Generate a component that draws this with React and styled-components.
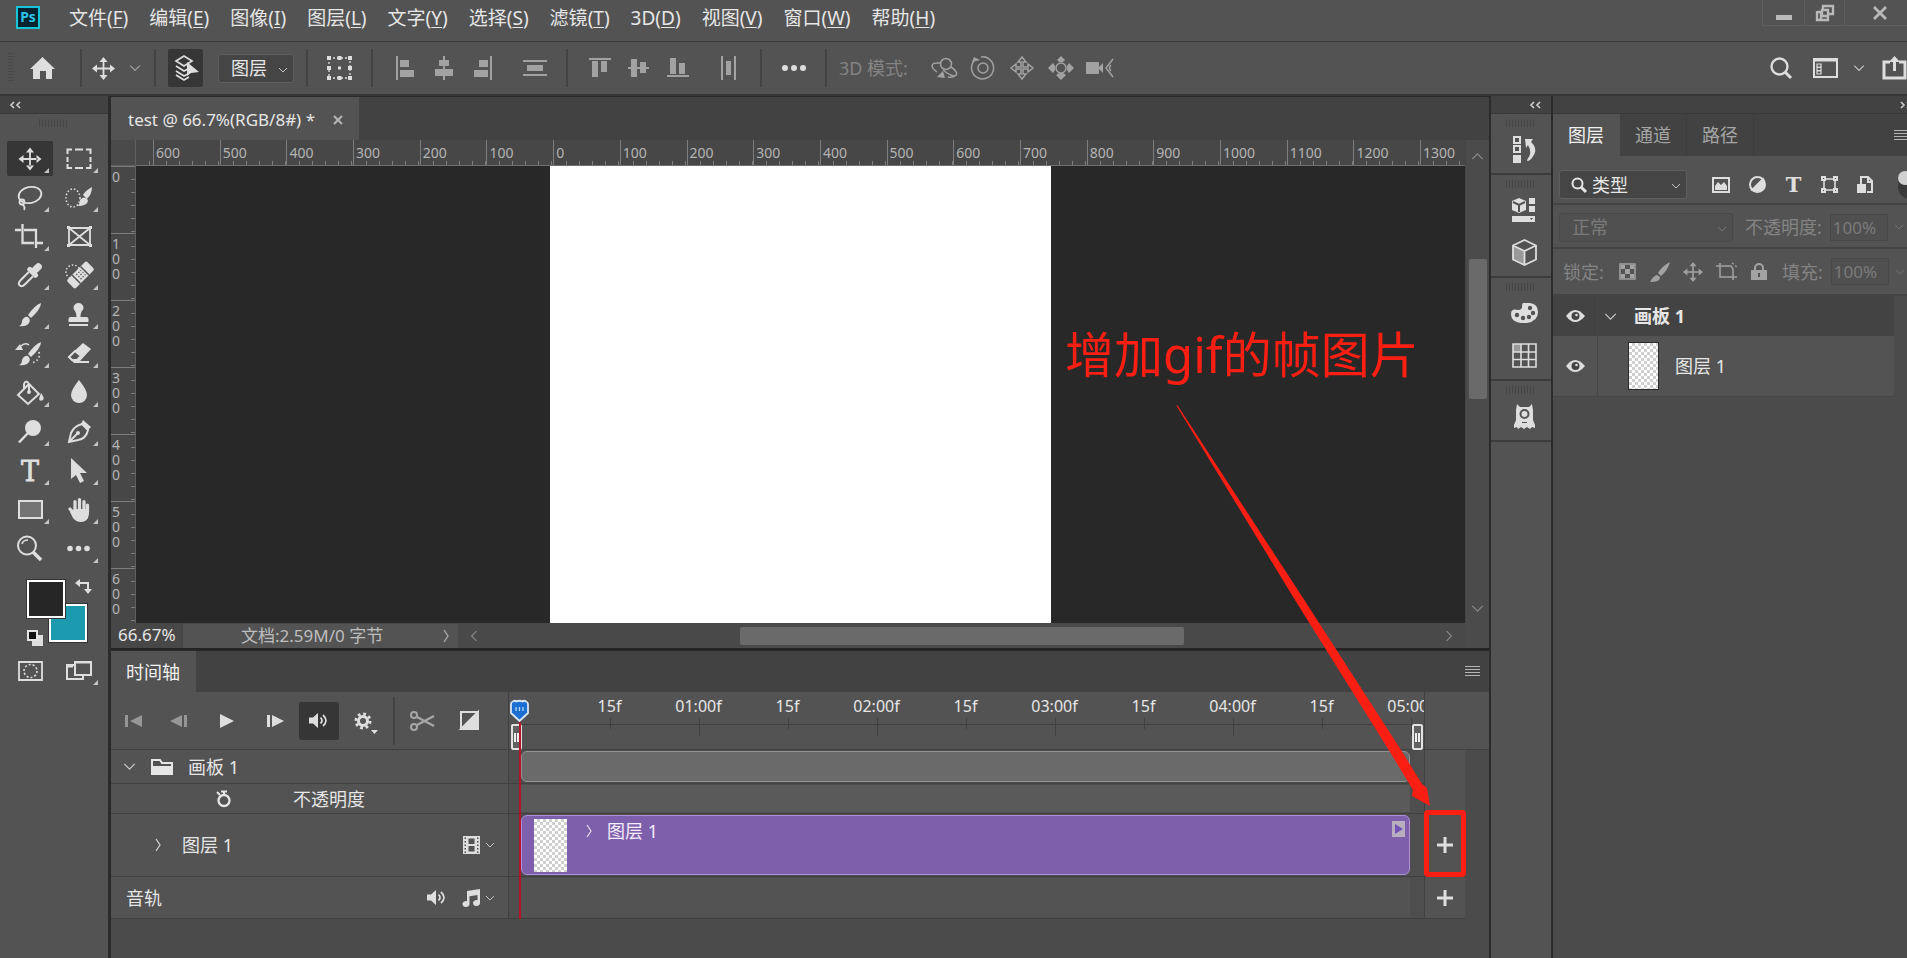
import React from "react";
import styled, { createGlobalStyle } from "styled-components";

const c = {
  panel: "#535353",
  deep: "#424242",
  mid: "#4b4b4b",
  line: "#3c3c3c",
  edge: "#2b2b2b",
  canvas: "#282828",
  icon: "#dedede",
  soft: "#a2a2a2",
  faint: "#848484",
  text: "#e6e6e6",
  red: "#fb1e12",
};

const GlobalStyle = createGlobalStyle`
  *, *::before, *::after { box-sizing: border-box; }
  body {
    margin: 0;
    background: ${c.mid};
    color: ${c.text};
    font: 18px/24px "Noto Sans", "Noto Sans CJK SC", sans-serif;
    overflow: hidden;
  }
  button, input, select { font: inherit; color: inherit; margin: 0; }
`;

/* ---------- shared parts ---------- */

const Page = styled.div`
  display: flex;
  flex-direction: column;
  min-height: 100vh;
`;

const Plain = styled.button`
  display: flex;
  align-items: center;
  justify-content: center;
  padding: 0;
  border: 0;
  background: none;
  color: ${(p) => p.$color || c.icon};
  flex: none;
  svg { flex: none; display: block; }
`;

const Drawing = styled.svg`
  display: block;
  flex: none;
  overflow: visible;
`;

function Icon({ w, h, children, solid }) {
  return (
    <Drawing
      width={w}
      height={h}
      viewBox={`0 0 ${w} ${h}`}
      fill={solid ? "currentColor" : "none"}
      stroke={solid ? "none" : "currentColor"}
      strokeWidth="2"
      aria-hidden="true"
    >
      {children}
    </Drawing>
  );
}

const Chevron = ({ dir = "down", size = 10 }) => {
  const d = {
    down: "M1 3l4 4 4-4",
    up: "M1 7l4-4 4 4",
    left: "M7 1L3 5l4 4",
    right: "M3 1l4 4-4 4",
  }[dir];
  return (
    <Drawing width={size} height={size} viewBox="0 0 10 10" fill="none" stroke="currentColor" strokeWidth="1" strokeOpacity="0.8" aria-hidden="true">
      <path d={d} />
    </Drawing>
  );
};

const TallChevron = () => (
  <Icon w={7} h={14}><path d="M1 1l4 6-4 6" strokeWidth="1.200" strokeOpacity="0.9" /></Icon>
);

const Double = ({ right }) => (
  <Icon w={11} h={8}>
    <path d={right ? "M1 1l3 3-3 3M7 1l3 3-3 3" : "M4 1L1 4l3 3M10 1L7 4l3 3"} strokeWidth="1.6" />
  </Icon>
);

const Grip = styled.div`
  width: 30px;
  height: 8px;
  background: repeating-linear-gradient(90deg, #464646 0 1px, transparent 1px 3px);
`;

const MenuLines = () => (
  <Icon w={15} h={11} solid>
    <path d="M0 0h15v1H0zM0 3h15v1H0zM0 6h15v1H0zM0 9h15v1H0z" />
  </Icon>
);

const Checker = styled.span`
  flex: none;
  width: ${(p) => p.$w}px;
  height: ${(p) => p.$h}px;
  background: repeating-conic-gradient(#cfcfcf 0 25%, #fff 0 50%) 0 0 / 6px 6px;
  box-shadow: ${(p) => (p.$framed ? `0 0 0 1px ${c.edge}` : "none")};
`;

const Move = ({ size = 23 }) => (
  <Drawing width={size} height={size} viewBox="0 0 23 23" fill="currentColor" aria-hidden="true">
    <path d="M10.6 4h1.8v6.6H19v1.8h-6.6V19h-1.8v-6.6H4v-1.8h6.6z" />
    <path d="M11.5 0l4 5h-8zM11.5 23l4-5h-8zM0 11.5l5-4v8zM23 11.5l-5-4v8z" />
  </Drawing>
);

const Speaker = () => (
  <Icon w={20} h={15} solid>
    <path d="M0 4.500h4L9 0v15l-5-4.500H0z" />
    <path d="M11.500 4.500q3 3 0 6M14 2q6 5.500 0 11" fill="none" stroke="currentColor" strokeWidth="1.7" />
  </Icon>
);

/* ---------- menu bar ---------- */

const MenuBar = styled.header`
  display: flex;
  height: 42px;
  background: ${c.panel};
  border-bottom: 1px solid ${c.line};
  padding-left: 16px;
`;

const Logo = styled.div`
  width: 24px;
  height: 23px;
  margin: 6px 18px 0 0;
  border: 2px solid #18c5d8;
  background: #04222f;
  color: #2cc3e6;
  font-size: 14px;
  font-weight: 700;
  line-height: 18px;
  text-align: center;
`;

const MenuItem = styled.button`
  height: 36px;
  padding: 0 10px 0 11px;
  border: 0;
  background: none;
  font-size: 19px;
  line-height: 36px;
  white-space: nowrap;
  u { text-underline-offset: 2px; text-decoration-thickness: 1px; }
`;

const WindowButtons = styled.div`
  display: flex;
  height: 26px;
  margin-left: auto;
  border: solid #5f5f5f;
  border-width: 0 0 1px 1px;
`;

const WindowButton = styled(Plain)`
  width: ${(p) => p.$w}px;
  padding-left: ${(p) => p.$pad || 0}px;
  color: #b9b9b9;
  & + & { border-left: 1px solid #5f5f5f; }
`;

const menus = [
  ["文件", "F"], ["编辑", "E"], ["图像", "I"], ["图层", "L"], ["文字", "Y"], ["选择", "S"],
  ["滤镜", "T"], ["3D", "D"], ["视图", "V"], ["窗口", "W"], ["帮助", "H"],
];

function TopMenu() {
  return (
    <MenuBar>
      <Logo>Ps</Logo>
      {menus.map(([name, key]) => (
        <MenuItem key={name}>{name}(<u>{key}</u>)</MenuItem>
      ))}
      <WindowButtons>
        <WindowButton $w={41} aria-label="最小化"><Icon w={16} h={16} solid><path d="M0 10h16v5H0z" /></Icon></WindowButton>
        <WindowButton $w={40} aria-label="还原">
          <Icon w={18} h={16}><path d="M7 5V1h10v8h-6M1 7h4v8h7v-3M1 6v9h9M6 5v6h6V5z" strokeWidth="2.300" /></Icon>
        </WindowButton>
        <WindowButton $w={63} $pad={8} aria-label="关闭"><Icon w={14} h={12}><path d="M1 0l12 12M13 0L1 12" strokeWidth="2.800" /></Icon></WindowButton>
      </WindowButtons>
    </MenuBar>
  );
}

/* ---------- options bar ---------- */

const OptionsBar = styled.div`
  display: flex;
  align-items: center;
  height: 54px;
  background: ${c.panel};
  border-bottom: 2px solid #363636;
`;

const Group = styled.div`
  display: flex;
  align-items: center;
  gap: ${(p) => p.$gap || 0}px;
  height: 38px;
  padding: 0 ${(p) => (p.$tight ? 4 : 12)}px;
  border-right: ${(p) => (p.$last ? 0 : 2)}px solid #434343;
`;

const Row = styled.div`
  display: flex;
  align-items: center;
`;

const Tool = styled(Plain)`
  width: ${(p) => p.$w || 39}px;
  height: 38px;
  background: ${(p) => (p.$on ? "#363636" : "none")};
  border-radius: 2px;
`;

const EdgeGrip = styled.div`
  width: 6px;
  height: 30px;
  margin: 0 3px 0 -4px;
  background: repeating-linear-gradient(#494949 0 1px, transparent 1px 3px);
`;

const Muted = styled.span`
  color: ${c.faint};
  white-space: nowrap;
`;

const SelectBox = styled.label`
  display: flex;
  align-items: center;
  position: relative;
  flex: none;
  width: ${(p) => p.$w}px;
  height: 29px;
  color: ${(p) => (p.$off ? "#7b7b7b" : c.text)};
  background: ${(p) => (p.$off ? "#505050" : "#454545")};
  border: 1px solid ${(p) => (p.$off ? "#484848" : "#5f5f5f")};
  border-radius: 3px;
  select {
    width: 100%;
    height: 100%;
    padding: 0 0 0 ${(p) => p.$pad}px;
    border: 0;
    background: none;
    appearance: none;
    line-height: 26px;
    opacity: 1;
    color: inherit;
  }
  > svg { position: absolute; right: 5px; top: 10px; pointer-events: none; }
  > svg.lead { left: 11px; right: auto; top: 6px; }
`;

const alignIcons = {
  left: "M0 0h2v24H0zM4 4h9v7H4zM4 14h14v7H4z",
  centerH: "M8 0h2v24H8zM4 4h10v6H4zM0 13h18v7H0z",
  right: "M16 0h2v24h-2zM5 4h9v7H5zM0 14h14v7H0z",
  spreadV: "M0 4h24v2H0zM0 18h24v2H0zM4 9h16v6H4z",
  top: "M0 2h22v2H0zM3 5h6v16H3zM12 5h6v11h-6z",
  middle: "M0 11h21v2H0zM3 3h6v18H3zM12 6h6v11h-6z",
  bottom: "M0 19h22v2H0zM3 2h6v16H3zM12 7h6v11h-6z",
  spreadH: "M0 0h2v24H0zM13 0h2v24h-2zM5 5h5v14H5z",
};

const Align = ({ name, w = 18, label }) => (
  <Tool $color={c.soft} aria-label={label}>
    <Icon w={w} h={24} solid><path d={alignIcons[name]} /></Icon>
  </Tool>
);

function Options() {
  return (
    <OptionsBar>
      <Group>
        <EdgeGrip />
        <Tool $w={51} aria-label="主页">
          <Icon w={25} h={22} solid><path d="M12.500 0L25 12h-3v10h-6v-8h-6v8H3V12H0z" /></Icon>
        </Tool>
      </Group>
      <Group $tight>
        <Tool $w={34} aria-label="移动工具"><Move /></Tool>
        <Tool $w={30} $color="#b5b5b5" aria-label="工具预设"><Chevron size={12} /></Tool>
      </Group>
      <Group $gap={15}>
        <Tool $w={35} $on aria-label="自动选择">
          <Icon w={26} h={26}>
            <path d="M3 6l8-5 8 5-8 5zM3 11l8 5 4-2M3 16l8 5 4-2M3 20l8 5 5-3" strokeWidth="1.700" />
            <path d="M14 7v14l4-3 8-1z" fill="currentColor" stroke="none" />
          </Icon>
        </Tool>
        <SelectBox $w={76} $pad={12}>
          <select aria-label="自动选择对象"><option>图层</option></select>
          <Chevron />
        </SelectBox>
      </Group>
      <Group>
        <Tool aria-label="显示变换控件">
          <Icon w={25} h={24}>
            <path d="M2 2h21v20H2z" strokeDasharray="2 2" strokeWidth="1.300" />
            <path d="M0 0h4v4H0zM10.500 0h4v4h-4zM21 0h4v4h-4zM0 10h4v4H0zM21 10h4v4h-4zM0 20h4v4H0zM10.500 20h4v4h-4zM21 20h4v4h-4zM11 10.500h3v3h-3z" fill="currentColor" stroke="none" />
          </Icon>
        </Tool>
      </Group>
      <Group $gap={13}>
        <Row>
          <Align name="left" label="左对齐" /><Align name="centerH" label="水平居中对齐" /><Align name="right" label="右对齐" />
        </Row>
        <Align name="spreadV" w={24} label="垂直分布" />
      </Group>
      <Group $gap={12}>
        <Row>
          <Align name="top" w={22} label="顶对齐" /><Align name="middle" w={21} label="垂直居中对齐" /><Align name="bottom" w={22} label="底对齐" />
        </Row>
        <Align name="spreadH" w={15} label="水平分布" />
      </Group>
      <Group>
        <Tool aria-label="更多">
          <Icon w={24} h={6} solid><circle cx="3" cy="3" r="3" /><circle cx="12" cy="3" r="3" /><circle cx="21" cy="3" r="3" /></Icon>
        </Tool>
      </Group>
      <Group $last $gap={17}>
        <Muted>3D 模式:</Muted>
        <Row>
          <Tool $color={c.soft} aria-label="环绕移动 3D 相机">
            <Icon w={27} h={22}>
              <circle cx="15" cy="7" r="5.500" strokeWidth="1.500" />
              <path d="M9 6C-2 5 0 11 6 15M12 13q6 5 11 6c5-1 2-6-3-9M17 20q4 1 7-1" strokeWidth="1.500" />
              <path d="M6 20l6-6 2 7z" fill="currentColor" stroke="none" />
            </Icon>
          </Tool>
          <Tool $color={c.soft} aria-label="滚动 3D 相机">
            <Icon w={24} h={24}>
              <circle cx="12" cy="12" r="5" strokeWidth="1.500" />
              <path d="M10 1a11 11 0 1 1-7 4" strokeWidth="1.500" />
              <path d="M1 6l2-5 6 3z" fill="currentColor" stroke="none" />
            </Icon>
          </Tool>
          <Tool $color={c.soft} aria-label="平移 3D 相机">
            <Icon w={24} h={24}>
              <path d="M12 1l4 5h-3v5h5V8l5 4-5 4v-3h-5v5h3l-4 5-4-5h3v-5H6v3l-5-4 5-4v3h5V6H8z" strokeWidth="1.500" />
            </Icon>
          </Tool>
          <Tool $color={c.soft} aria-label="滑动 3D 相机">
            <Icon w={26} h={24}>
              <circle cx="13" cy="12" r="5" strokeWidth="1.500" />
              <path d="M13 0l4 4-2 2h-4L9 4zM13 24l5-5-3-2h-4l-3 2zM0 12l5-5 2 3v4l-2 3zM26 12l-5-5-2 3v4l2 3z" fill="currentColor" stroke="none" />
            </Icon>
          </Tool>
          <Tool $color={c.soft} aria-label="变焦 3D 相机">
            <Icon w={28} h={18}>
              <path d="M0 4q0-1 1-1h11q1 0 1 1v10q0 1-1 1H1q-1 0-1-1zM13 8l4-4v10l-4-4z" fill="currentColor" stroke="none" />
              <path d="M27 0l-7 9 7 9M25 6q-3 3 0 6" strokeWidth="1.500" />
            </Icon>
          </Tool>
        </Row>
      </Group>
      <RightTools>
        <Tool $w={44} aria-label="搜索">
          <Icon w={22} h={22}><circle cx="9.500" cy="9.500" r="8" strokeWidth="2.300" /><path d="M15 15l6 6" strokeWidth="3" /></Icon>
        </Tool>
        <Tool $w={44} aria-label="工作区">
          <Icon w={25} h={20}>
            <path d="M1 1h23v18H1zM1 2.500h23" /><path d="M4 6h4v3H4zM4 9.500h4v3H4zM4 13h4v3H4z" strokeWidth="1.200" />
          </Icon>
        </Tool>
        <Tool $w={24} aria-label="工作区菜单"><Chevron size={12} /></Tool>
        <ShareTool aria-label="共享">
          <Icon w={25} h={24}><path d="M8 6H2v16h21V6h-6" strokeWidth="3" /><path d="M12.500 4v11" strokeWidth="3" /><path d="M7 6l5.500-6L18 6z" fill="currentColor" stroke="none" /></Icon>
        </ShareTool>
      </RightTools>
    </OptionsBar>
  );
}

const RightTools = styled.div`
  display: flex;
  margin-left: auto;
`;

const ShareTool = styled(Tool)`
  width: 36px;
  justify-content: flex-end;
`;

/* ---------- toolbox ---------- */

const Main = styled.main`
  display: flex;
  flex: 1;
  min-height: 0;
`;

const Toolbox = styled.aside`
  flex: none;
  width: 111px;
  background: ${c.panel};
  border-right: 3px solid ${c.edge};
`;

const DockHeader = styled.div`
  display: flex;
  align-items: center;
  height: 18px;
  padding: 0 10px;
  color: #cfcfcf;
  background: ${c.deep};
  border-bottom: 1px solid #393939;
  justify-content: ${(p) => p.$justify || "flex-start"};
`;

const GripRow = styled.div`
  display: flex;
  justify-content: center;
  height: ${(p) => p.$h}px;
  padding-top: 5px;
`;

const ToolGrid = styled.div`
  display: grid;
  grid-template-columns: 46px 46px;
  gap: 4px 3px;
  padding-left: 7px;
`;

const ToolCell = styled(Plain)`
  width: 46px;
  height: 35px;
  border-radius: 2px;
  background: ${(p) => (p.$on ? "#363636" : "none")};
`;

const brush = (
  <>
    <path d="M34 6q-6 2-13 12l3 3Q34 12 34 6z" />
    <path d="M12 29q3-1 3-5a5 5 0 0 1 6-4q3 3 1 6-3 4-10 3z" />
  </>
);
const line = { fill: "none", stroke: "currentColor", strokeWidth: 2 };

const tools = [
  ["移动", <g key="i" transform="translate(11.500 6.500)"><path d="M10.600 4h1.800v6.600H19v1.800h-6.600V19h-1.800v-6.600H4v-1.800h6.600zM11.500 0l4 5h-8zM11.500 23l4-5h-8zM0 11.500l5-4v8zM23 11.500l-5-4v8z" /></g>],
  ["矩形选框", <path key="i" {...line} d="M11.500 13V8.500H16M19 8.500h8M30 8.500h4.500V13M34.500 16v5M34.500 23v4H30M27 27h-8M16 27h-4.500v-4M11.500 21v-5" />],
  ["套索", <g key="i" {...line} strokeWidth="1.800"><ellipse cx="23" cy="15" rx="11.500" ry="8" transform="rotate(-12 23 15)" /><circle cx="15" cy="22" r="2.500" /><path d="M14 24q5 2 3 6" /></g>],
  ["快速选择", <g key="i"><ellipse cx="17" cy="18" rx="7" ry="9" {...line} strokeWidth="1.500" strokeDasharray="1.500 2" /><path d="M36 7q-6 3-9 8l4 4q5-5 5-12zM21 26q3-1 3-6 4-5 8 0 0 6-11 6z" /></g>],
  ["裁剪", <path key="i" {...line} strokeWidth="2.300" d="M8 11h6M17 11h12v18M15.500 5v19H27M30 24h6" />],
  ["图框", <g key="i"><path {...line} strokeWidth="1.800" d="M13 9h21v17H13zM13 9l21 17M34 9L13 26" /><path d="M11 7h3v3h-3zM33 7h3v3h-3zM11 25h3v3h-3zM33 25h3v3h-3z" /></g>, true],
  ["吸管", <g key="i" transform="translate(22.500 17.500) rotate(45)"><rect x="-3.500" y="-16" width="7" height="11" rx="3.500" /><rect x="-6.500" y="-7" width="13" height="5" rx="2" /><path {...line} d="M-3-2V9q0 5 3 5t3-5V-2" /></g>],
  ["污点修复", <g key="i"><circle cx="17" cy="14" r="7" {...line} strokeWidth="1.500" strokeDasharray="1.500 2" /><g transform="translate(24.500 17) rotate(-45)"><rect x="-14" y="-6" width="28" height="12" rx="2" /><path d="M-6-6V6M6-6V6" stroke={c.panel} strokeWidth="1.500" /><path d="M-3-3H4M-3 0H4M-3 3H4" stroke={c.panel} strokeWidth="1.200" strokeDasharray="1.500 1.500" /></g></g>],
  ["画笔", <g key="i">{brush}</g>],
  ["仿制图章", <path key="i" d="M22.500 6a5 5 0 0 1 5 5c0 2-3 3-3 9h6q2 0 2 2v3h-20v-3q0-2 2-2h6c0-6-3-7-3-9a5 5 0 0 1 5-5zM13 27h19v2H13z" />],
  ["历史记录画笔", <g key="i">{brush}<path d="M8 14l5-6 3 6z" /><path {...line} strokeWidth="1.500" d="M14 10q4-4 8-1" /><path {...line} strokeWidth="1.800" strokeDasharray="1.500 2.500" d="M32 16q2 8-7 11" /></g>],
  ["橡皮擦", <g key="i"><path d="M27 7l8 6-11 12h-8l-4-4z" /><path d="M19 15l6 5-4 4h-5l-3-3z" fill={c.panel} stroke="currentColor" /><path d="M16 25h17v2H18z" /></g>],
  ["油漆桶", <g key="i"><path {...line} d="M22 9l10 10-11 10-10-9zM17 14V9q2-5 5 0v7" /><circle cx="22" cy="17" r="2" /><path d="M34 18q4 5 2 7-3 2-4-1z" /></g>],
  ["模糊", <path key="i" d="M23 5q8 10 8 15a8 8 0 0 1-16 0q0-5 8-15z" />],
  ["减淡", <g key="i"><circle cx="26" cy="14" r="8" /><path {...line} strokeWidth="2.500" d="M21 19l-9 9.500" /></g>],
  ["钢笔", <g key="i"><path {...line} d="M26 10l6 6q-2 9-10 10l-9 2 2-9q3-7 11-9zM14 27l8-8" /><path d="M27 6l8 7-3 3-7-6z" /><circle cx="22" cy="19" r="2" /></g>],
  ["横排文字", <text key="i" x="23" y="28" textAnchor="middle" fontFamily="DejaVu Serif, serif" fontSize="27" stroke="currentColor" strokeWidth="0.800">T</text>],
  ["路径选择", <path key="i" d="M15 5v21l5-4 4 8 4-2-4-8h7z" />],
  ["矩形", <rect key="i" x="12" y="9" width="23" height="17" fill="#747474" stroke="currentColor" strokeWidth="2" />],
  ["抓手", <g key="i"><path {...line} strokeWidth="3.200" strokeLinecap="round" d="M19 18V9.500M23.500 17V7.500M28 18V9.500M31.500 20v-7M14 17l5 6" /><path d="M17.500 17H33v5q-1 8-8 8-5 0-8-4l-3-6 3-1z" /></g>],
  ["缩放", <g key="i" {...line}><circle cx="20" cy="14.500" r="9" /><path d="M15 13q1-4 6-4" strokeWidth="1.500" /><path d="M26 21l8 8" strokeWidth="3.500" /></g>, true],
  ["编辑工具栏", <g key="i"><circle cx="14" cy="17.500" r="2.800" /><circle cx="22.500" cy="17.500" r="2.800" /><circle cx="31" cy="17.500" r="2.800" /></g>],
];

const Swatches = styled.div`
  position: relative;
  width: 66px;
  height: 70px;
  margin: 12px 0 5px 26px;
`;

const Swatch = styled.button`
  position: absolute;
  left: ${(p) => p.$x}px;
  top: ${(p) => p.$y}px;
  width: 38px;
  height: 38px;
  padding: 0;
  border: 2px solid #fff;
  outline: 1px solid #333;
  border-radius: 0;
  background: ${(p) => p.$fill};
`;

const SwatchAction = styled(Plain)`
  position: absolute;
  left: ${(p) => p.$x}px;
  top: ${(p) => p.$y}px;
`;

function ToolPanel() {
  return (
    <Toolbox>
      <DockHeader><Double /></DockHeader>
      <GripRow $h={27}><Grip /></GripRow>
      <ToolGrid>
        {tools.map(([label, art, single], i) => (
          <ToolCell key={label} $on={i === 0} aria-label={label}>
            <Icon w={46} h={35} solid>
              {art}
              {!single && <path d="M42 27v5h-5z" fill="#c4c4c4" />}
            </Icon>
          </ToolCell>
        ))}
      </ToolGrid>
      <Swatches>
        <Swatch $x={23} $y={26} $fill="#1c9bb0" aria-label="背景色" />
        <Swatch $x={1} $y={2} $fill="#262626" aria-label="前景色" />
        <SwatchAction $x={49} $y={1} aria-label="切换前景色和背景色">
          <Icon w={17} h={16}><path d="M5 4h8v8" /><path d="M0 4l5-4v8zM9 10h8l-4 5z" fill="currentColor" stroke="none" /></Icon>
        </SwatchAction>
        <SwatchAction $x={1} $y={52} aria-label="默认颜色">
          <Icon w={16} h={16}><path d="M5 5h11v11H5z" fill="currentColor" stroke="none" /><path d="M1 1h9v9H1z" fill="#111" stroke="#e4e4e4" /></Icon>
        </SwatchAction>
      </Swatches>
      <ToolGrid>
        <ToolCell aria-label="快速蒙版">
          <Icon w={25} h={20}><path d="M1 1h23v18H1z" strokeWidth="1.800" /><circle cx="12.500" cy="10" r="6.500" strokeWidth="1.600" strokeDasharray="2 2" /></Icon>
        </ToolCell>
        <ToolCell aria-label="屏幕模式">
          <Icon w={46} h={35}>
            <path d="M18 12h-7v14h16v-4M19 9h16v13H19zM19 9.500h16" /><path d="M11 13h6" strokeWidth="3" /><path d="M42 27v5h-5z" fill="#c4c4c4" stroke="none" />
          </Icon>
        </ToolCell>
      </ToolGrid>
    </Toolbox>
  );
}

/* ---------- document window ---------- */

const Center = styled.section`
  position: relative;
  display: flex;
  flex-direction: column;
  flex: 1;
  min-width: 0;
`;

const TabStrip = styled.div`
  display: flex;
  align-items: stretch;
  flex: none;
  height: ${(p) => p.$h}px;
  background: ${c.deep};
  border-top: 1px solid ${c.edge};
`;

const DocTab = styled.div`
  display: flex;
  align-items: center;
  gap: 18px;
  padding: 3px 16px 0 17px;
  font-size: 17px;
  background: ${c.panel};
  white-space: nowrap;
`;

const DocGrid = styled.div`
  flex: 1;
  display: grid;
  grid-template: 26px minmax(0, 1fr) 25px / 25px minmax(0, 1fr) 24px;
  background: ${c.mid};
`;

const Corner = styled.div`
  background: #4a4a4a;
  border: solid #5f5f5f;
  border-width: 0 1px 1px 0;
`;

const HRuler = styled.div`
  display: flex;
  overflow: hidden;
  background: #474747;
  border-bottom: 1px solid #6f6f6f;
`;

const HCell = styled.div`
  flex: ${(p) => (p.$w ? `0 0 ${p.$w}px` : "1 1 0")};
  min-width: 0;
  padding-left: 2px;
  overflow: hidden;
  color: #b4b4b4;
  font-size: 14px;
  line-height: 26px;
  border-left: 1px solid ${(p) => (p.$lead ? "transparent" : "#7d7d7d")};
  background: repeating-linear-gradient(90deg, transparent 0 12px, #7d7d7d 12px 13px) 0 100% / 100% 4px no-repeat;
`;

const VRuler = styled.div`
  display: flex;
  flex-direction: column;
  contain: size;
  overflow: hidden;
  background: #474747;
  border-right: 1px solid #5f5f5f;
`;

const VCell = styled.div`
  flex: 0 0 67px;
  padding: 2px 0 0 1px;
  border-top: 1px solid #7d7d7d;
  color: #b4b4b4;
  font-size: 14px;
  line-height: 15px;
  background: repeating-linear-gradient(transparent 0 12px, #7d7d7d 12px 13px) 100% 0 / 4px 100% no-repeat;
  span {
    display: block;
    width: 10px;
    word-break: break-all;
  }
`;

const Viewport = styled.div`
  display: flex;
  justify-content: center;
  background: ${c.canvas};
`;

const Artboard = styled.div`
  width: 501px;
  background: #fff;
`;

const VScroll = styled.div`
  grid-column: 3;
  grid-row: 1 / 3;
  display: flex;
  flex-direction: column;
  align-items: center;
  background: ${c.mid};
  border-left: 1px solid #444;
`;

const Space = styled.div`
  flex: ${(p) => p.$n} 1 0;
`;

const VThumb = styled.div`
  flex: 139 1 0;
  width: 18px;
  background: #6a6a6a;
  border-radius: 2px;
`;

const HThumb = styled.div`
  flex: 443 1 0;
  height: 18px;
  background: #6a6a6a;
  border-radius: 2px;
`;

const ScrollButton = styled(Plain)`
  width: ${(p) => p.$w}px;
  height: ${(p) => p.$h}px;
  color: #999;
`;

const StatusBar = styled.div`
  grid-column: 1 / 3;
  display: flex;
  align-items: center;
  background: #494949;
`;

const Zoom = styled.input`
  width: 72px;
  height: 25px;
  padding: 0 0 2px 7px;
  border: 0;
  background: #474747;
  font-size: 17px;
`;

const DocInfo = styled.button`
  display: flex;
  align-items: center;
  justify-content: space-between;
  width: 275px;
  height: 24px;
  padding: 0 8px 0 58px;
  border: 0;
  background: ${c.panel};
  color: #bdbdbd;
  font-size: 17px;
  line-height: 24px;
  white-space: nowrap;
`;

const left = ["600", "500", "400", "300", "200", "100"];
const right = Array.from({ length: 13 }, (_, i) => String(i * 100));
const rows = ["0", "100", "200", "300", "400", "500", "600"];

function DocumentWindow() {
  return (
    <>
      <TabStrip $h={44}>
        <DocTab>
          test @ 66.7%(RGB/8#) *
          <Plain aria-label="关闭文档" $color="#b5b5b5"><Icon w={10} h={10}><path d="M1 1l8 8M9 1L1 9" /></Icon></Plain>
        </DocTab>
      </TabStrip>
      <DocGrid>
        <Corner />
        <HRuler>
          <HCell $w={17} $lead />
          {left.concat(right).map((n, i) => <HCell key={i}>{n}</HCell>)}
          <HCell $w={45}>1300</HCell>
        </HRuler>
        <VScroll>
          <ScrollButton $w={24} $h={32} aria-label="向上滚动"><Chevron dir="up" size={13} /></ScrollButton>
          <Space $n={87} />
          <VThumb />
          <Space $n={194} />
          <ScrollButton $w={24} $h={30} aria-label="向下滚动"><Chevron size={13} /></ScrollButton>
        </VScroll>
        <VRuler>
          {rows.map((n) => (
            <VCell key={n}><span>{n}</span></VCell>
          ))}
        </VRuler>
        <Viewport><Artboard /></Viewport>
        <StatusBar>
          <Zoom aria-label="缩放比例" defaultValue="66.67%" />
          <DocInfo>文档:2.59M/0 字节<TallChevron /></DocInfo>
          <ScrollButton $w={32} $h={24} aria-label="向左滚动"><Chevron dir="left" size={12} /></ScrollButton>
          <Space $n={250} />
          <HThumb />
          <Space $n={249} />
          <ScrollButton $w={32} $h={24} aria-label="向右滚动"><Chevron dir="right" size={12} /></ScrollButton>
        </StatusBar>
      </DocGrid>
    </>
  );
}

/* ---------- timeline ---------- */

const TimelinePanel = styled.section`
  flex: none;
  padding-bottom: 39px;
  border-top: 2px solid #242424;
  background: ${c.mid};
`;

const PanelTab = styled.button`
  padding: 0 15px;
  border: 0;
  border-right: 1px solid ${(p) => (p.$on ? c.panel : "#3c3c3c")};
  background: ${(p) => (p.$on ? c.panel : "none")};
  color: ${(p) => (p.$on ? "#f0f0f0" : "#a5a5a5")};
  white-space: nowrap;
`;

const TabMenu = styled(Plain)`
  width: 34px;
  margin-left: auto;
`;

const TrackRow = styled.div`
  display: grid;
  grid-template-columns: 397px minmax(0, 1fr) 41px 24px;
  height: ${(p) => p.$h}px;
`;

const Head = styled.div`
  display: flex;
  align-items: center;
  gap: ${(p) => p.$gap || 0}px;
  padding: 0 11px 0 ${(p) => p.$indent || 0}px;
  background: ${c.panel};
  border-bottom: 1px solid #404040;
  white-space: nowrap;
`;

const Lane = styled.div`
  display: flex;
  min-width: 0;
  padding: 1px 14px 1px 12px;
  background: #4e4e4e;
  border-left: 1px solid #404040;
  border-bottom: 1px solid #404040;
`;

const RulerLane = styled.div`
  position: relative;
  min-width: 0;
  background: ${c.panel};
  border-left: 1px solid #404040;
  border-bottom: 1px solid #404040;
`;

const AddCell = styled.div`
  position: relative;
  display: flex;
  align-items: center;
  justify-content: center;
  background: ${c.panel};
  border-left: 1px solid #404040;
  border-bottom: ${(p) => (p.$open ? 0 : 1)}px solid #404040;
`;

const Filler = styled.div`
  background: ${c.panel};
  border-bottom: 1px solid #404040;
`;

const Highlight = styled.span`
  position: absolute;
  inset: -4px -1px -1px -1px;
  border: 5px solid ${c.red};
  border-radius: 4px;
  pointer-events: none;
`;

const Controls = styled.div`
  display: grid;
  grid-template-columns: 45px 44px 54px 42px 46px 48px 8px 48px 46px;
  align-items: center;
  justify-items: center;
  background: ${c.panel};
  border-bottom: 1px solid #404040;
`;

const Rule = styled.span`
  width: 2px;
  height: 48px;
  background: #434343;
`;

const Marks = styled.div`
  display: flex;
  height: 100%;
  padding-left: 56px;
  overflow: hidden;
  background: linear-gradient(#404040, #404040) 12px 32px / 100% 1px no-repeat;
`;

const MarkList = styled.div`
  display: flex;
  flex: 1;
  min-width: 0;
  margin-right: -31px;
`;

const Mark = styled.span`
  position: relative;
  flex: 1 1 0;
  font-size: 16px;
  line-height: 28px;
  text-align: center;
  &::after {
    content: "";
    position: absolute;
    left: 50%;
    top: 26px;
    width: 1px;
    height: ${(p) => (p.$major ? 18 : 11)}px;
    background: #404040;
  }
`;

const WorkHandle = styled.span`
  position: absolute;
  top: 32px;
  left: ${(p) => (p.$end ? "auto" : "2px")};
  right: ${(p) => (p.$end ? "1px" : "auto")};
  display: flex;
  align-items: center;
  justify-content: center;
  gap: 1px;
  width: 11px;
  height: 26px;
  border: 2px solid #e2e2e2;
  border-radius: 2px;
  background: #606060;
  &::before, &::after {
    content: "";
    width: 2px;
    height: 9px;
    background: #f0f0f0;
  }
`;

const Playhead = styled.div`
  position: absolute;
  z-index: 2;
  left: 0;
  top: 8px;
  width: 21px;
  display: flex;
  flex-direction: column;
  align-items: center;
`;

const PlayheadLine = styled.span`
  width: 2px;
  height: 197px;
  background: #b5122c;
`;

const Clip = styled.div`
  display: flex;
  flex: 1;
  min-width: 0;
  padding: 3px 4px 0 12px;
  border: 1px solid ${(p) => (p.$video ? "#ad90d8" : "#929292")};
  border-radius: 6px;
  background: ${(p) => (p.$video ? "#7e5fab" : "#6a6a6a")};
  color: #f3ecfb;
`;

const ClipName = styled.span`
  display: flex;
  align-items: center;
  gap: 14px;
  height: 24px;
  margin-left: 19px;
`;

const ClipBadge = styled(Plain)`
  width: 13px;
  height: 16px;
  margin: 2px 0 0 auto;
  background: #b9aebf;
  color: #7452b4;
`;

const Blank = styled.div`
  flex: 1;
  background: ${(p) => (p.$light ? "#5a5a5a" : c.panel)};
`;

const RightSide = styled.span`
  display: flex;
  align-items: center;
  gap: 13px;
  margin-left: auto;
`;

const DropIcon = styled(Plain)`
  gap: 5px;
  width: 37px;
`;

const Plus = () => (
  <Icon w={16} h={16}><path d="M8 0v16M0 8h16" strokeWidth="3" /></Icon>
);

function Timeline() {
  const marks = ["15f", "01:00f", "15f", "02:00f", "15f", "03:00f", "15f", "04:00f", "15f", "05:00f"];
  return (
    <TimelinePanel>
      <TabStrip $h={42}>
        <PanelTab $on>时间轴</PanelTab>
        <TabMenu aria-label="时间轴菜单" $color="#b5b5b5"><MenuLines /></TabMenu>
      </TabStrip>

      <TrackRow $h={58}>
        <Controls>
          <Plain $color="#969696" aria-label="转到第一帧"><Icon w={17} h={12} solid><path d="M0 0h3v12H0zM17 0v12L5 6z" /></Icon></Plain>
          <Plain $color="#969696" aria-label="上一帧"><Icon w={17} h={12} solid><path d="M14 0h3v12h-3zM12 0v12L0 6z" /></Icon></Plain>
          <Plain aria-label="播放"><Icon w={14} h={14} solid><path d="M0 0l14 7-14 7z" /></Icon></Plain>
          <Plain aria-label="下一帧"><Icon w={17} h={12} solid><path d="M0 0h3v12H0zM5 0v12l12-6z" /></Icon></Plain>
          <Tool $on $w={40} aria-label="静音"><Speaker /></Tool>
          <Plain aria-label="设置">
            <Icon w={26} h={26}>
              <circle cx="10" cy="13" r="4.500" strokeWidth="3" />
              <circle cx="10" cy="13" r="7" strokeWidth="3" strokeDasharray="2.750 2.750" />
              <path d="M18 22h7l-3.500 4z" fill="currentColor" stroke="none" />
            </Icon>
          </Plain>
          <Rule />
          <Plain $color="#a6a6a6" aria-label="拆分">
            <Icon w={25} h={20}><circle cx="4" cy="4" r="3" /><circle cx="4" cy="16" r="3" /><path d="M7 6l17 9M7 14l17-9" strokeWidth="2.500" /></Icon>
          </Plain>
          <Plain aria-label="过渡效果">
            <Icon w={19} h={19}><path d="M1 1h17v17H1z" /><path d="M18 1v17H1z" fill="currentColor" /></Icon>
          </Plain>
        </Controls>
        <RulerLane>
          <Marks>
            <MarkList>
              {marks.map((m, i) => <Mark key={i} $major={i % 2 === 1}>{m}</Mark>)}
            </MarkList>
          </Marks>
          <WorkHandle />
          <WorkHandle $end />
          <Playhead>
            <Icon w={19} h={22}>
              <path d="M3 1.500Q5 0 6.500 1.500 9.500 0 12.500 1.500 14 0 16 1.500 18 2 18 4v9l-8.500 8L1 13V4q0-2 2-2.500z" fill="#1c6fd2" stroke="#d9e6f5" strokeWidth="1.800" />
              <path d="M6 7v4M9.500 7v4M13 7v4" stroke="#b8d6f5" strokeWidth="1.300" />
            </Icon>
            <PlayheadLine />
          </Playhead>
        </RulerLane>
        <AddCell />
        <Filler />
      </TrackRow>

      <TrackRow $h={34}>
        <Head $indent={12} $gap={15}>
          <Chevron size={13} />
          <Icon w={22} h={16}><path d="M1 15V1h8l2 3h10v11z" /><path d="M1 8h20v7H1z" fill="currentColor" /></Icon>
          <span>画板 1</span>
        </Head>
        <Lane><Clip /></Lane>
        <AddCell $open />
      </TrackRow>

      <TrackRow $h={30}>
        <Head $indent={105}>
          <Icon w={16} h={17}><circle cx="8" cy="10.500" r="5.500" strokeWidth="2.300" /><path d="M8 5V1M5 1.500h6M1 2l3 3" /></Icon>
          <OpacityName>不透明度</OpacityName>
        </Head>
        <Lane><Blank $light /></Lane>
        <AddCell $open />
      </TrackRow>

      <TrackRow $h={63}>
        <Head $indent={44} $gap={20}>
          <TallChevron />
          <span>图层 1</span>
          <RightSide>
            <DropIcon aria-label="视频选项">
              <Icon w={17} h={18} solid>
                <path fillRule="evenodd" d="M0 0h17v18H0zM5.500 2.500V8h6V2.500zM5.500 10v5.500h6V10zM1.500 1.500V3H3V1.500zM1.500 5v1.500H3V5zM1.500 8.500V10H3V8.500zM1.500 12v1.500H3V12zM1.500 15.500V17H3v-1.500zM14 1.500V3h1.500V1.500zM14 5v1.500h1.500V5zM14 8.500V10h1.500V8.500zM14 12v1.500h1.500V12zM14 15.500V17h1.500v-1.500z" />
              </Icon>
              <Chevron />
            </DropIcon>
          </RightSide>
        </Head>
        <Lane>
          <Clip $video>
            <Checker $w={33} $h={53} />
            <ClipName><TallChevron />图层 1</ClipName>
            <ClipBadge aria-label="过渡"><Icon w={8} h={10} solid><path d="M0 0l8 5-8 5z" /></Icon></ClipBadge>
          </Clip>
        </Lane>
        <AddCell>
          <Plain aria-label="添加媒体"><Plus /></Plain>
          <Highlight />
        </AddCell>
      </TrackRow>

      <TrackRow $h={42}>
        <Head $indent={15}>
          <span>音轨</span>
          <RightSide>
            <Plain aria-label="静音音轨"><Speaker /></Plain>
            <DropIcon aria-label="音频选项">
              <Icon w={18} h={18} solid><path d="M5 2l13-2v14a3.500 3 0 1 1-2.500-2.800V6l-8 1.300V15A3.500 3 0 1 1 5 12.200z" /></Icon>
              <Chevron />
            </DropIcon>
          </RightSide>
        </Head>
        <Lane><Blank /></Lane>
        <AddCell><Plain aria-label="添加音频"><Plus /></Plain></AddCell>
      </TrackRow>
    </TimelinePanel>
  );
}

const OpacityName = styled.span`
  margin-left: 61px;
`;

/* ---------- annotation ---------- */

const Annotation = styled.div`
  position: absolute;
  right: 59px;
  bottom: 152px;
  z-index: 3;
  display: flex;
  flex-direction: column;
  align-items: flex-end;
  gap: 21px;
  width: 365px;
  pointer-events: none;
`;

const Note = styled.p`
  align-self: flex-start;
  margin: 0;
  color: ${c.red};
  font-size: 49px;
  line-height: 60px;
  white-space: nowrap;
`;

/* ---------- icon dock ---------- */

const Dock = styled.aside`
  flex: none;
  width: 64px;
  background: ${c.panel};
  border: solid ${c.edge};
  border-width: 0 2px;
`;

const DockGroup = styled.div`
  padding-bottom: 3px;
  border-bottom: 2px solid ${c.line};
`;

const DockButton = styled(Plain)`
  width: 100%;
  height: 42px;
  padding-left: 6px;
`;

const DockPanel = styled.aside`
  flex: none;
  width: 354px;
  overflow: hidden;
  background: ${c.mid};
`;

function IconDock() {
  return (
    <Dock>
      <DockHeader $justify="flex-end"><Double /></DockHeader>
      <DockGroup>
        <GripRow $h={14}><Grip /></GripRow>
        <DockButton aria-label="历史记录">
          <Icon w={23} h={27}>
            <path d="M1 1h6v6H1zM1 10h6v6H1z" /><path d="M0 19h8v8H0z" fill="currentColor" stroke="none" />
            <path d="M12 3h8l-2 3q9 8-1 18-3 2-3 0 6-7 1-15l-2 3z" fill="currentColor" stroke="none" />
          </Icon>
        </DockButton>
      </DockGroup>
      <DockGroup>
        <GripRow $h={14}><Grip /></GripRow>
        <DockButton aria-label="库">
          <Icon w={24} h={25} solid>
            <path d="M7 0l7 3v9l-7 3-7-3V3z" /><path d="M1 4l6 3 6-3M7 7v7" fill="none" stroke={c.panel} />
            <path d="M17 0h6v6h-6zM17 8h6v6h-6zM0 18h23v6H0z" /><path d="M18 20h3l-1.500 2z" fill={c.panel} />
          </Icon>
        </DockButton>
        <DockButton aria-label="3D">
          <Icon w={25} h={27}>
            <path d="M1 6l11.500 6v13L1 20z" fill="#999" stroke="none" />
            <path d="M12.500 1L24 6.500v14L12.500 26 1 20.500v-14zM1 6.500L12.500 12 24 6.500M12.500 12v14" strokeWidth="1.800" />
          </Icon>
        </DockButton>
      </DockGroup>
      <DockGroup>
        <GripRow $h={14}><Grip /></GripRow>
        <DockButton aria-label="颜色">
          <Icon w={27} h={20} solid>
            <path d="M12 0h7q8 1 8 9 0 9-11 11Q0 21 0 11 0 5 7 7q5 0 4-5z" />
            <g fill={c.panel}><circle cx="6" cy="12" r="2.200" /><circle cx="12" cy="15" r="2.200" /><circle cx="18" cy="14" r="2.200" /><circle cx="22" cy="10" r="2.200" /><circle cx="19" cy="5" r="2.200" /></g>
          </Icon>
        </DockButton>
        <DockButton aria-label="色板">
          <Icon w={25} h={25}><path d="M1 1h8v8H1z" fill="#999" stroke="none" /><path d="M1 1h23v23H1zM9 1v23M16.500 1v23M1 9h23M1 16.500h23" strokeWidth="1.600" /></Icon>
        </DockButton>
      </DockGroup>
      <DockGroup>
        <GripRow $h={14}><Grip /></GripRow>
        <DockButton aria-label="扩展">
          <Icon w={21} h={25} solid>
            <path d="M3 0l3 3h9l3-3 1 6v10l2 5v3l-3-1-2 2-3-2-3 2-3-2-3 2-1-2-3 1v-3l2-5V6z" />
            <circle cx="10.500" cy="10" r="4" fill="none" stroke={c.panel} strokeWidth="2" /><path d="M8 18h5v1H8z" fill={c.panel} />
          </Icon>
        </DockButton>
      </DockGroup>
    </Dock>
  );
}

/* ---------- layers panel ---------- */

const PanelTop = styled.div`
  background: ${c.panel};
`;

const LayerTabs = styled.div`
  display: flex;
  height: 42px;
  background: ${c.deep};
`;

const FieldRow = styled.div`
  display: flex;
  align-items: center;
  height: ${(p) => p.$h}px;
  padding: ${(p) => p.$top || 0}px 0 0 6px;
  border-bottom: 2px solid #444;
`;

const FilterIcons = styled.div`
  display: flex;
  flex: none;
  margin-left: 16px;
`;

const FilterButton = styled(Plain)`
  width: ${(p) => p.$w || 36}px;
  height: 29px;
`;

const Switch = styled.button`
  flex: none;
  width: 24px;
  height: 28px;
  margin-left: 15px;
  padding: 0;
  border: 0;
  border-radius: 12px;
  background: #3a3a3a;
  &::before {
    content: "";
    display: block;
    width: 14px;
    height: 14px;
    margin-bottom: 14px;
    border-radius: 50%;
    background: #d0d0d0;
  }
`;

const ValueField = styled.label`
  display: flex;
  align-items: center;
  flex: none;
  color: ${c.faint};
  white-space: nowrap;
  input {
    width: 58px;
    height: 27px;
    margin-left: 8px;
    padding: 0 0 0 2px;
    color: #7b7b7b;
    background: #505050;
    border: 1px solid #484848;
    font-size: 17px;
  }
  svg { margin-left: 6px; color: #777; }
`;

const LockRow = styled.div`
  display: flex;
  align-items: center;
  flex: none;
  width: 223px;
  padding-left: 4px;
  color: ${c.faint};
`;

const LockIcons = styled.div`
  display: flex;
  margin-left: 7px;
  color: ${c.soft};
`;

const BlendWrap = styled.div`
  flex: none;
  width: 186px;
`;

const Layers = styled.ul`
  margin: 0 13px 0 0;
  padding: 0;
  list-style: none;
`;

const Layer = styled.li`
  display: flex;
  align-items: center;
  height: ${(p) => (p.$group ? 40 : 61)}px;
  background: ${(p) => (p.$group ? "#434343" : c.panel)};
  border-bottom: ${(p) => (p.$group ? 0 : 1)}px solid #454545;
  font-weight: ${(p) => (p.$group ? 700 : 400)};
`;

const EyeCell = styled(Plain)`
  width: 45px;
  height: 100%;
  border-right: 1px solid #474747;
`;

const LayerBody = styled.div`
  display: flex;
  align-items: center;
  gap: ${(p) => p.$gap}px;
  padding-left: ${(p) => p.$indent}px;
`;

const Eye = () => (
  <Icon w={19} h={12} solid>
    <path d="M0 6q9-12 19 0-10 12-19 0z" /><circle cx="9.500" cy="6" r="4" fill="#444" /><circle cx="10.500" cy="5" r="1.300" />
  </Icon>
);

function LayersPanel() {
  return (
    <DockPanel>
      <DockHeader $justify="flex-end"><EdgeMark><Double right /></EdgeMark></DockHeader>
      <PanelTop>
        <LayerTabs>
          <PanelTab $on>图层</PanelTab>
          <PanelTab>通道</PanelTab>
          <PanelTab>路径</PanelTab>
          <EdgeMenu aria-label="图层面板菜单" $color="#b5b5b5"><MenuLines /></EdgeMenu>
        </LayerTabs>
        <FieldRow $h={49} $top={10}>
          <SelectBox $w={128} $pad={32}>
            <Drawing className="lead" width="16" height="16" viewBox="0 0 16 16" fill="none" stroke="currentColor" strokeWidth="2">
              <circle cx="6.500" cy="6.500" r="5" /><path d="M10 10l5 5" strokeWidth="3" />
            </Drawing>
            <select aria-label="图层过滤"><option>类型</option></select>
            <Chevron />
          </SelectBox>
          <FilterIcons>
            <FilterButton aria-label="像素图层"><Icon w={18} h={16}><path d="M1 1h16v14H1z" /><path d="M3 13V9l3-4 3 3 3-3 3 4v4z" fill="currentColor" stroke="none" /></Icon></FilterButton>
            <FilterButton aria-label="调整图层"><Icon w={17} h={17}><circle cx="8.500" cy="8.500" r="7.500" /><path d="M14 3A8 8 0 0 1 3 14z" fill="currentColor" /></Icon></FilterButton>
            <FilterButton aria-label="文字图层"><Icon w={17} h={17} solid><text x="8.500" y="15.500" textAnchor="middle" fontFamily="DejaVu Serif, serif" fontWeight="700" fontSize="21">T</text></Icon></FilterButton>
            <FilterButton aria-label="形状图层"><Icon w={17} h={17}><path d="M3 3h11v11H3z" strokeWidth="1.600" /><path d="M0 0h5v5H0zM12 0h5v5h-5zM0 12h5v5H0zM12 12h5v5h-5z" fill="currentColor" stroke="none" /><path d="M2 2h1v1H2zM14 2h1v1h-1zM2 14h1v1H2zM14 14h1v1h-1z" fill={c.panel} stroke="none" /></Icon></FilterButton>
            <FilterButton aria-label="智能对象"><Icon w={16} h={17}><path d="M4 8V1h7l4 4v11h-5M11 1v5h4" /><path d="M0 8h9v9H0z" fill="currentColor" stroke="none" /></Icon></FilterButton>
          </FilterIcons>
          <Switch aria-label="打开图层过滤" />
        </FieldRow>
        <FieldRow $h={44} $top={2}>
          <BlendWrap>
            <SelectBox $w={174} $pad={12} $off>
              <select disabled aria-label="混合模式"><option>正常</option></select>
              <Chevron />
            </SelectBox>
          </BlendWrap>
          <ValueField>不透明度:<input disabled defaultValue="100%" /><Chevron /></ValueField>
        </FieldRow>
        <FieldRow $h={47}>
          <LockRow>
            锁定:
            <LockIcons>
              <FilterButton $w={33} $color={c.soft} aria-label="锁定透明像素"><Icon w={17} h={17}><path d="M1 1h15v15H1z" strokeWidth="1.500" /><path d="M2 2h4v4H2zM11 2h4v4h-4zM6 6h5v5H6zM2 11h4v4H2zM11 11h4v4h-4z" fill="currentColor" stroke="none" /></Icon></FilterButton>
              <FilterButton $w={33} $color={c.soft} aria-label="锁定图像像素"><Icon w={20} h={20} solid><path d="M20 0q-8 4-12 11l3 3Q18 8 20 0zM0 20q3-6 7-7l3 2q1 5-10 5z" /></Icon></FilterButton>
              <FilterButton $w={33} $color={c.soft} aria-label="锁定位置"><Move size={20} /></FilterButton>
              <FilterButton $w={33} $color={c.soft} aria-label="防止自动嵌套"><Icon w={21} h={17}><path d="M0 3h15l2 3v11M4 0v14h17" strokeWidth="1.500" /><path d="M16 0l5 4" strokeWidth="1.500" strokeDasharray="2 2" /></Icon></FilterButton>
              <FilterButton $w={33} $color={c.soft} aria-label="锁定全部"><Icon w={16} h={17}><path d="M4 8V5a4 4 0 0 1 8 0v3" /><path d="M0 7h16v10H0zM7 10v4h2v-4z" fill="currentColor" fillRule="evenodd" stroke="none" /></Icon></FilterButton>
            </LockIcons>
          </LockRow>
          <ValueField>填充:<input disabled defaultValue="100%" /><Chevron /></ValueField>
        </FieldRow>
      </PanelTop>
      <Layers>
        <Layer $group>
          <EyeCell aria-label="画板可见性"><Eye /></EyeCell>
          <LayerBody $indent={6} $gap={17}><Chevron size={13} /><span>画板 1</span></LayerBody>
        </Layer>
        <Layer>
          <EyeCell aria-label="图层可见性"><Eye /></EyeCell>
          <LayerBody $indent={31} $gap={17}><Checker $w={29} $h={46} $framed /><span>图层 1</span></LayerBody>
        </Layer>
      </Layers>
    </DockPanel>
  );
}

const EdgeMark = styled.span`
  margin-right: -14px;
`;

const EdgeMenu = styled(Plain)`
  margin: 0 -2px 0 auto;
`;

export default function App() {
  return (
    <Page>
      <GlobalStyle />
      <TopMenu />
      <Options />
      <Main>
        <ToolPanel />
        <Center>
          <DocumentWindow />
          <Timeline />
          <Annotation>
            <Note>增加gif的帧图片</Note>
            <Drawing width="254" height="401" viewBox="0 0 254 401" fill={c.red} aria-hidden="true">
              <path d="M0 0l2 1L127 193 225 345l21 34 5 4 3 18-18-10 1-6-23-38L119 195z" />
            </Drawing>
          </Annotation>
        </Center>
        <IconDock />
        <LayersPanel />
      </Main>
    </Page>
  );
}
